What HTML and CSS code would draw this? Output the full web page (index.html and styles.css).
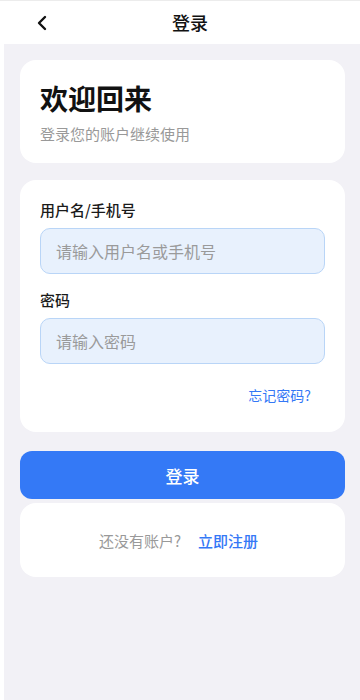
FILE: index.html
```html
<!DOCTYPE html>
<html lang="zh-CN">
<head>
<meta charset="utf-8">
<meta name="viewport" content="width=device-width, initial-scale=1">
<title>登录</title>
<link rel="stylesheet" href="styles.css">
</head>
<body>
<header class="nav">
  <span class="back">
    <svg width="12" height="16" viewBox="0 0 12 16"><polyline points="9,2 3,8 9,14" fill="none" stroke="#111" stroke-width="2.4" stroke-linecap="round" stroke-linejoin="round"/></svg>
  </span>
  <h1 class="nav-title">登录</h1>
</header>
<main class="page">
  <section class="card welcome">
    <h2 class="welcome-title">欢迎回来</h2>
    <p class="welcome-sub">登录您的账户继续使用</p>
  </section>
  <section class="card form">
    <label class="field-label">用户名/手机号</label>
    <div class="input"><span class="placeholder">请输入用户名或手机号</span></div>
    <label class="field-label second">密码</label>
    <div class="input"><span class="placeholder">请输入密码</span></div>
    <div class="forgot-row"><a class="forgot">忘记密码?</a></div>
  </section>
  <button class="login-btn">登录</button>
  <section class="card register">
    <span class="muted">还没有账户?</span>
    <a class="register-link">立即注册</a>
  </section>
</main>
</body>
</html>
```
FILE: styles.css
```css
* { box-sizing: border-box; }
html, body { margin: 0; padding: 0; }
body {
  background: #fff;
  font-family: "Noto Sans CJK SC", "Noto Sans", sans-serif;
  color: #111;
  height: 700px;
  display: flex;
  flex-direction: column;
}
.nav {
  height: 44px;
  display: flex;
  align-items: center;
  padding: 0 30px 2px;
  background: #fff;
  border-top: 1px solid #ececec;
}
.back {
  width: 20px;
  display: flex;
  align-items: center;
  padding-left: 6px;
  padding-top: 2px;
}
.back svg { display: block; }
.nav-title {
  flex: 1;
  margin: 0;
  text-align: center;
  font-size: 18px;
  font-weight: 500;
  line-height: 24px;
}
.page {
  flex: 1;
  margin-left: 4px;
  background: #f2f1f6;
  padding: 16px 15px 0 16px;
  display: flex;
  flex-direction: column;
}
.card {
  background: #fff;
  border-radius: 16px;
}
.welcome {
  padding: 24px 20px 19px;
}
.welcome-title {
  margin: 0;
  font-size: 28px;
  line-height: 28px;
  font-weight: 700;
}
.welcome-sub {
  margin: 12px 0 0;
  font-size: 15px;
  line-height: 20px;
  color: #999;
}
.form {
  margin-top: 17px;
  padding: 20px 20px 27px;
  display: flex;
  flex-direction: column;
}
.field-label {
  font-size: 15px;
  line-height: 20px;
  font-weight: 500;
  color: #1a1a1a;
}
.field-label.second { margin-top: 16px; }
.input {
  margin-top: 8px;
  height: 46px;
  border-radius: 10px;
  background: #e8f1fd;
  border: 1px solid #b9d5f7;
  display: flex;
  align-items: center;
  padding: 0 15px;
}
.placeholder {
  font-size: 16px;
  color: #9a9a9a;
}
.forgot-row {
  margin-top: 21px;
  padding-right: 14px;
  display: flex;
  justify-content: flex-end;
}
.forgot {
  font-size: 14px;
  line-height: 20px;
  color: #3478f6;
}
.login-btn {
  margin-top: 19px;
  height: 48px;
  border: none;
  border-radius: 12px;
  background: #3479f6;
  color: #fff;
  font-family: inherit;
  font-size: 17px;
  font-weight: 500;
}
.register {
  margin-top: 4px;
  height: 74px;
  display: flex;
  align-items: center;
  justify-content: center;
  gap: 17px;
  padding-right: 8px;
  font-size: 15px;
}
.muted { color: #999; }
.register-link {
  color: #3478f6;
  font-weight: 500;
}
```
